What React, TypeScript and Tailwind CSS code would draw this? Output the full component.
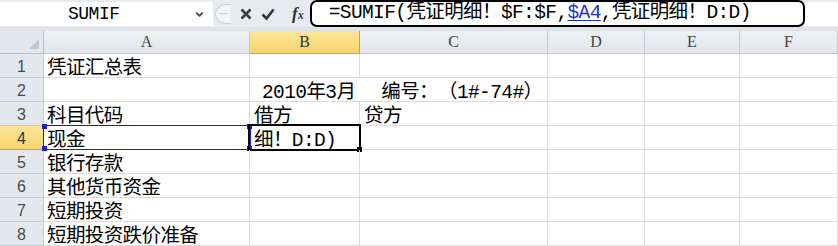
import { ChevronDown } from "lucide-react";

const cols = ["A", "B", "C", "D", "E", "F"];
const colTpl =
  "grid grid-cols-[44px_206px_110px_188px_97px_95px_98px] grid-rows-[23px_repeat(8,24px)]";

const cellFont =
  "font-[family-name:'Liberation_Mono','Noto_Sans_CJK_SC',monospace] text-[19.5px] tracking-[-0.6px] text-black";

const colA = [
  "凭证汇总表",
  "",
  "科目代码",
  "现金",
  "银行存款",
  "其他货币资金",
  "短期投资",
  "短期投资跌价准备",
];

function Handle({ pos }: { pos: string }) {
  return <span className={`absolute h-[5px] w-[5px] bg-[#1b1bd0] ${pos}`} />;
}

export default function App() {
  return (
    <div className="h-[246px] w-[838px] overflow-hidden bg-white [text-spacing-trim:space-all]">
      {/* formula bar */}
      <div className="flex h-[27px] items-stretch bg-[#e7eaee]">
        <div className="mt-[2px] mb-[1px] flex w-[213px] items-center bg-white">
          <span className="ml-[68px] font-[family-name:'Liberation_Mono',monospace] text-[18px] tracking-[-0.5px] text-black">
            SUMIF
          </span>
          <ChevronDown
            size={11}
            strokeWidth={4}
            className="ml-auto mr-[8px] text-[#444]"
          />
        </div>
        <div className="flex items-center">
          <span className="ml-[2px] flex h-[20px] w-[16px] items-center justify-center rounded-l-full border border-r-0 border-[#c9ced5] bg-[#f3f4f6] text-[11px] text-[#bcc3cc]">
            ─
          </span>
          <svg width="14" height="14" viewBox="0 0 14 14" className="ml-[8px]">
            <path d="M2.5 2.5 L11.5 11.5 M11.5 2.5 L2.5 11.5" stroke="#3d3d3d" strokeWidth="2.6" />
          </svg>
          <svg width="14" height="14" viewBox="0 0 14 14" className="ml-[8px]">
            <path d="M1.5 7.5 L5.5 11.5 L12.5 2.5" stroke="#333" strokeWidth="2.6" fill="none" />
          </svg>
          <span className="ml-[17px] font-[family-name:'Liberation_Serif',serif] text-[17px] font-bold italic leading-none text-[#333]">
            f<span className="text-[12px]">x</span>
          </span>
        </div>
        <div className="ml-[6px] flex w-[495px] items-center rounded-[7px] border-2 border-black bg-white pl-[17px]">
          <span className={`${cellFont} whitespace-pre`}>
            =SUMIF(凭证明细！$F:$F,
            <span className="text-[#1a2fd0] underline decoration-1 underline-offset-2">
              $A4
            </span>
            ,凭证明细！D:D)
          </span>
        </div>
        <div className="mt-[2px] mb-[1px] flex-1 bg-white" />
      </div>
      <div className="h-[4px] bg-[#dfe3e8]" />

      {/* sheet */}
      <div className={colTpl}>
        <div className="relative border-r border-b border-[#b9c0c9] bg-[#e4e8ed]">
          <svg
            width="10"
            height="10"
            viewBox="0 0 10 10"
            className="absolute right-[4px] bottom-[4px]"
          >
            <path d="M10 0 L10 10 L0 10 Z" fill="#c3c8cf" />
          </svg>
        </div>
        {cols.map((c) => (
          <div
            key={c}
            className={`flex items-center justify-center border-r border-b font-[family-name:'Liberation_Serif',serif] text-[16px] ${
              c === "B"
                ? "border-[#c9a341] bg-gradient-to-b from-[#fbe59a] to-[#f7d56a] text-[#333]"
                : "border-[#c3c9d1] bg-gradient-to-b from-[#eef1f4] to-[#e2e6eb] text-[#444]"
            }`}
          >
            {c}
          </div>
        ))}

        {colA.map((a, i) => {
          const r = i + 1;
          return [
            <div
              key={`h${r}`}
              className={`flex items-center justify-center border-r border-b pt-[2px] font-[family-name:'Liberation_Sans',sans-serif] text-[16px] ${
                r === 4
                  ? "border-[#c9a341] bg-gradient-to-b from-[#fbe59a] to-[#f7d56a] text-[#333]"
                  : "border-[#c3c9d1] bg-[#e4e8ed] text-[#4a4a4a]"
              }`}
            >
              {r}
            </div>,
            <div
              key={`a${r}`}
              className={`relative flex items-end border-r border-b border-[#dadcdd] pl-[3px] leading-[16px] whitespace-nowrap ${cellFont}`}
            >
              {a}
              {r === 4 && (
                <div className="absolute -top-px -left-px h-[25px] w-[208px] border-[1.5px] border-[#1b1bd0]">
                  <Handle pos="-top-[2px] -left-[2px]" />
                  <Handle pos="-top-[2px] -right-[2px]" />
                  <Handle pos="-bottom-[2px] -left-[2px]" />
                  <Handle pos="-bottom-[2px] -right-[2px]" />
                </div>
              )}
            </div>,
            <div
              key={`b${r}`}
              className={`relative flex items-end border-b border-[#dadcdd] leading-[16px] whitespace-pre ${cellFont} ${
                r === 2 ? "z-10 pl-[12px]" : "border-r pl-[4px]"
              }`}
            >
              {r === 2 && (
                <>
                  <span>2010年3月</span>
                  <span className="ml-[26px]">编号：（1#-74#）</span>
                </>
              )}
              {r === 3 && "借方"}
              {r === 4 && (
                <>
                  <span>细！D:D)</span>
                  <div className="absolute -top-[2px] -left-[2px] h-[27px] w-[113px] border-2 border-black" />
                  <span className="absolute -right-[3px] -bottom-[3px] h-[5px] w-[5px] bg-black" />
                </>
              )}
            </div>,
            <div
              key={`c${r}`}
              className={`flex items-end border-r border-b border-[#dadcdd] pl-[4px] leading-[16px] ${cellFont}`}
            >
              {r === 3 && "贷方"}
            </div>,
            <div key={`d${r}`} className="border-r border-b border-[#dadcdd]" />,
            <div key={`e${r}`} className="border-r border-b border-[#dadcdd]" />,
            <div key={`f${r}`} className="border-r border-b border-[#dadcdd]" />,
          ];
        })}
      </div>
    </div>
  );
}
